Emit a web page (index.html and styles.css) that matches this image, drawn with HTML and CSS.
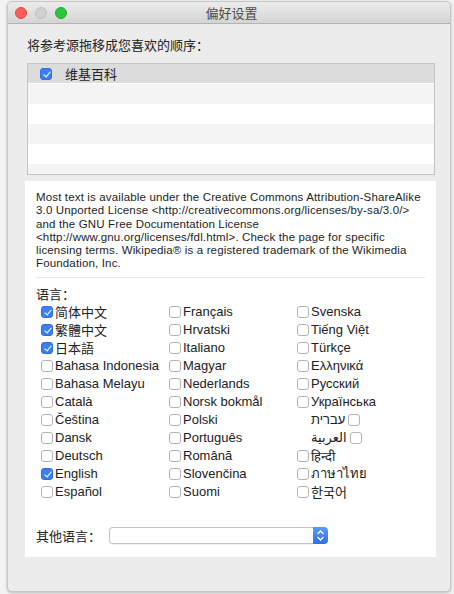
FILE: index.html
```html
<!DOCTYPE html>
<html>
<head>
<meta charset="utf-8">
<link rel="stylesheet" href="styles.css">
</head>
<body>
<div class="window">
  <div class="titlebar">
    <div class="lights">
      <span class="light red"></span>
      <span class="light gray"></span>
      <span class="light green"></span>
    </div>
    <div class="title">偏好设置</div>
  </div>
  <div class="content">
    <div class="label">将参考源拖移成您喜欢的顺序：</div>
    <div class="table">
      <div class="row head"><span class="cb on big"></span><span class="src">维基百科</span></div>
      <div class="row alt"></div>
      <div class="row"></div>
      <div class="row alt"></div>
      <div class="row"></div>
      <div class="row alt short"></div>
    </div>
    <div class="panel">
      <p class="license">Most text is available under the Creative Commons Attribution-ShareAlike 3.0 Unported License &lt;http://creativecommons.org/licenses/by-sa/3.0/&gt; and the GNU Free Documentation License &lt;http://www.gnu.org/licenses/fdl.html&gt;. Check the page for specific licensing terms. Wikipedia® is a registered trademark of the Wikimedia Foundation, Inc.</p>
      <div class="sep"></div>
      <div class="lang-label">语言：</div>
      <div class="langs">
        <div class="col">
          <div class="item"><span class="cb on"></span>简体中文</div>
          <div class="item"><span class="cb on"></span>繁體中文</div>
          <div class="item"><span class="cb on"></span>日本語</div>
          <div class="item"><span class="cb"></span>Bahasa Indonesia</div>
          <div class="item"><span class="cb"></span>Bahasa Melayu</div>
          <div class="item"><span class="cb"></span>Català</div>
          <div class="item"><span class="cb"></span>Čeština</div>
          <div class="item"><span class="cb"></span>Dansk</div>
          <div class="item"><span class="cb"></span>Deutsch</div>
          <div class="item"><span class="cb on"></span>English</div>
          <div class="item"><span class="cb"></span>Español</div>
        </div>
        <div class="col">
          <div class="item"><span class="cb"></span>Français</div>
          <div class="item"><span class="cb"></span>Hrvatski</div>
          <div class="item"><span class="cb"></span>Italiano</div>
          <div class="item"><span class="cb"></span>Magyar</div>
          <div class="item"><span class="cb"></span>Nederlands</div>
          <div class="item"><span class="cb"></span>Norsk bokmål</div>
          <div class="item"><span class="cb"></span>Polski</div>
          <div class="item"><span class="cb"></span>Português</div>
          <div class="item"><span class="cb"></span>Română</div>
          <div class="item"><span class="cb"></span>Slovenčina</div>
          <div class="item"><span class="cb"></span>Suomi</div>
        </div>
        <div class="col">
          <div class="item"><span class="cb"></span>Svenska</div>
          <div class="item"><span class="cb"></span>Tiếng Việt</div>
          <div class="item"><span class="cb"></span>Türkçe</div>
          <div class="item"><span class="cb"></span>Ελληνικά</div>
          <div class="item"><span class="cb"></span>Русский</div>
          <div class="item"><span class="cb"></span>Українська</div>
          <div class="item rtl"><span class="rtl-text" dir="rtl">עברית</span><span class="cb"></span></div>
          <div class="item rtl"><span class="rtl-text" dir="rtl">العربية</span><span class="cb"></span></div>
          <div class="item"><span class="cb"></span>हिन्दी</div>
          <div class="item"><span class="cb"></span>ภาษาไทย</div>
          <div class="item"><span class="cb"></span>한국어</div>
        </div>
      </div>
      <div class="other">
        <span class="other-label">其他语言：</span>
        <div class="popup">
          <div class="popup-field"></div>
          <div class="popup-arrows">
            <svg width="15" height="17" viewBox="0 0 15 17">
              <path d="M4.5 7 L7.5 4 L10.5 7" fill="none" stroke="#fff" stroke-width="1.3"/>
              <path d="M4.5 10 L7.5 13 L10.5 10" fill="none" stroke="#fff" stroke-width="1.3"/>
            </svg>
          </div>
        </div>
      </div>
    </div>
  </div>
</div>
</body>
</html>
```

FILE: styles.css
```css
html, body {
  margin: 0;
  padding: 0;
}
body {
  background: #f3f3f3;
  width: 454px;
  height: 594px;
  overflow: hidden;
  font-family: "Liberation Sans", "Noto Sans CJK SC", "DejaVu Sans", sans-serif;
  color: #222;
}
.window {
  margin: 1px 0 0 7px;
  width: 442px;
  height: 589px;
  border: 1px solid #c6c6c6;
  border-radius: 5px;
  background: #ececec;
  box-shadow: 0 1px 3px rgba(0,0,0,0.25);
  overflow: hidden;
  display: flex;
  flex-direction: column;
}
.titlebar {
  height: 21px;
  border-bottom: 1px solid #b3b3b3;
  background: linear-gradient(#ececec, #d4d4d4);
  position: relative;
  display: flex;
  align-items: center;
  justify-content: center;
}
.lights {
  position: absolute;
  left: 7px;
  top: 5px;
  display: flex;
  gap: 8px;
}
.light {
  width: 10px;
  height: 10px;
  border-radius: 50%;
  border: 1px solid;
}
.red { background: #fc5f57; border-color: #e1463f; }
.gray { background: #d1d1d1; border-color: #c0c0c0; }
.green { background: #29c73f; border-color: #1fab31; }
.title {
  font-size: 13px;
  color: #4d4d4d;
  margin-left: 5px;
}
.content {
  padding: 14px 0 0 19px;
}
.label {
  font-size: 13px;
  line-height: 16px;
  height: 16px;
}
.table {
  margin-top: 9px;
  width: 406px;
  border: 1px solid #c4c4c4;
  background: #fff;
}
.row {
  height: 20px;
  background: #fff;
}
.row.alt { background: #f3f4f3; }
.row.short { height: 10px; }
.row.head {
  height: 19px;
  border-bottom: 1px solid #fff;
  background: #dcdcdc;
  display: flex;
  align-items: center;
  padding-left: 12px;
}
.src {
  font-size: 13px;
  margin-left: 11px;
  color: #222;
}
.panel {
  margin: 6px 0 0 -2px;
  width: 389px;
  height: 366px;
  background: #fff;
  padding: 10px 11px 0 11px;
}
.license {
  margin: 0;
  font-size: 11.5px;
  line-height: 13.3px;
  color: #1e1e1e;
  letter-spacing: 0.15px;
}
.sep {
  margin-top: 6px;
  height: 1px;
  background: #e6e6e6;
}
.lang-label {
  margin-top: 8px;
  font-size: 13px;
  line-height: 18px;
  height: 17px;
}
.langs {
  display: flex;
  padding-left: 5px;
}
.col {
  width: 129px;
  display: flex;
  flex-direction: column;
}
.item {
  height: 18px;
  display: flex;
  align-items: center;
  font-size: 13px;
  white-space: nowrap;
  color: #222;
}
.item.rtl {
  padding-left: 14px;
}
.item.rtl .cb {
  margin-right: 0;
  margin-left: 3px;
}
.cb {
  box-sizing: border-box;
  width: 12px;
  height: 12px;
  border: 1px solid #b5b5b5;
  border-radius: 3px;
  background: #fff;
  margin-right: 2px;
  flex: none;
  position: relative;
}
.cb.on {
  background: #3a7ff5;
  border-color: #2f6fe0;
}
.cb.on::after {
  content: "";
  position: absolute;
  left: 3.5px;
  top: 1px;
  width: 3px;
  height: 6px;
  border-right: 1.6px solid #fff;
  border-bottom: 1.6px solid #fff;
  transform: rotate(40deg);
}
.cb.big {
  width: 12px;
  height: 12px;
}
.other {
  margin-top: 25px;
  display: flex;
  align-items: center;
}
.other-label {
  font-size: 13px;
  width: 73px;
}
.popup {
  display: flex;
  width: 219px;
  height: 17px;
}
.popup-field {
  flex: 1;
  box-sizing: border-box;
  border: 1px solid #c4c4c4;
  border-right: none;
  border-radius: 4px 0 0 4px;
  background: #fff;
  box-shadow: 0 1px 0 rgba(0,0,0,0.05);
}
.popup-arrows {
  width: 15px;
  height: 17px;
  background: linear-gradient(#5a9bf8, #2f6ef1);
  border-radius: 0 4px 4px 0;
}
.popup-arrows svg { display: block; }
```
